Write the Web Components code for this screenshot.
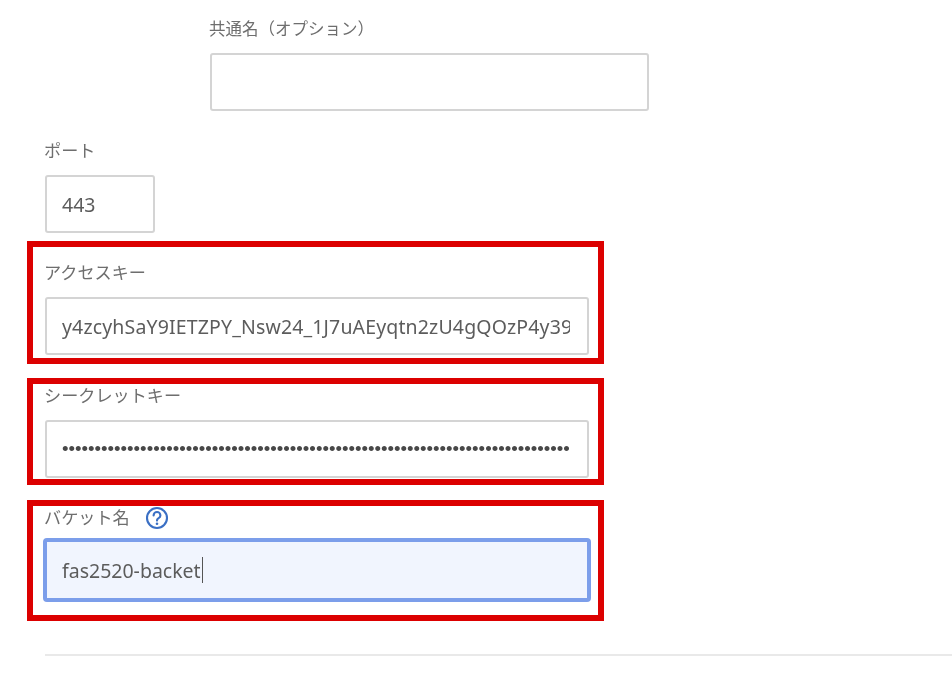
<!DOCTYPE html>
<html lang="ja">
<head>
<meta charset="utf-8">
<title>バケット設定</title>
<style>
html,body{margin:0;padding:0;background:#fff}
body{font-family:"Noto Sans","Noto Sans CJK JP",sans-serif;color:#5f5f5f;overflow:hidden;height:679px}
</style>
</head>
<body>
<x-form-page>
  <x-field label="共通名（オプション）" style="margin-left:210px;width:439px;--label-size:16.5px"></x-field>
  <x-field style="margin:28px 0 0 45px;width:110px" label="ポート" value="443"></x-field>
  <x-highlight style="margin-top:8px;--pt:14px;--pb:3px">
    <x-field label="アクセスキー" value="y4zcyhSaY9IETZPY_Nsw24_1J7uAEyqtn2zU4gQOzP4y39" style="--track:.15px"></x-field>
  </x-highlight>
  <x-highlight style="margin-top:14px;--pt:0px;--pb:1px">
    <x-field label="シークレットキー" secret></x-field>
  </x-highlight>
  <x-highlight style="margin-top:15px;--pt:0px;--pb:13px">
    <x-field label="バケット名" value="fas2520-backet" focused help style="--gap:8px"></x-field>
  </x-highlight>
  <x-rule></x-rule>
</x-form-page>
<script>
customElements.define('x-form-page', class extends HTMLElement {
  constructor(){
    super();
    this.attachShadow({mode:'open'}).innerHTML = `<style>
      :host{display:flex;flex-direction:column;align-items:flex-start;padding-top:17px;width:952px;box-sizing:border-box;filter:blur(.3px)}
    </style><slot></slot>`;
  }
});
customElements.define('x-highlight', class extends HTMLElement {
  constructor(){
    super();
    this.attachShadow({mode:'open'}).innerHTML = `<style>
      :host{display:block;box-sizing:border-box;width:577px;margin-left:27px;border:6px solid #dc0000;
        padding:var(--pt,0) 9px var(--pb,0) 12px}
    </style><slot></slot>`;
  }
});
customElements.define('x-help-icon', class extends HTMLElement {
  constructor(){
    super();
    this.attachShadow({mode:'open'}).innerHTML = `<style>
      :host{display:inline-flex;width:24px;height:24px}
      svg{display:block;width:100%;height:100%}
    </style><svg viewBox="0 0 24 24" fill="none" stroke="#3a6fc4" aria-hidden="true">
      <circle cx="12" cy="12" r="10" stroke-width="2.1"/>
      <path d="M8.6 9.4a3.4 3.4 0 0 1 6.8 0c0 1.9-1.5 2.5-2.5 3.3-.7.5-.9 1-.9 1.9" stroke-width="2.1" stroke-linecap="round"/>
      <circle cx="12" cy="17.7" r="1.3" fill="#3a6fc4" stroke="none"/>
    </svg>`;
  }
});
customElements.define('x-field', class extends HTMLElement {
  connectedCallback(){
    if(this.shadowRoot) return;
    const label = this.getAttribute('label')||'';
    let value = this.getAttribute('value')||'';
    const secret = this.hasAttribute('secret');
    if(secret) value = '•'.repeat(78);
    const focused = this.hasAttribute('focused');
    const root = this.attachShadow({mode:'open'});
    root.innerHTML = `<style>
      :host{display:block}
      .label{display:flex;align-items:center;height:24px;margin:0 0 var(--gap,12px) -1px;font-size:var(--label-size,17.15px);line-height:24px;color:#6e6e6e;gap:15px}
      .box{box-sizing:border-box;height:58px;border:2px solid #d4d4d4;border-radius:3px;background:#fff;
        display:flex;align-items:center;padding:0 17px 0 15px;font-size:19.5px;color:#5c5c5c;overflow:hidden}
      .box.focused{height:64px;margin:0 -2px;border:4px solid #7c9eea;border-radius:4px;background:#f1f5fe;padding-left:15px}
      .value{white-space:nowrap;overflow:hidden;flex:0 1 auto;letter-spacing:var(--track,0)}
      .caret{flex:none;width:1px;height:26px;background:#555;margin-left:1px}
      .secret{font-size:18.6px;font-family:"Liberation Sans",sans-serif;color:#484848}
    </style>
    <div class="label"><span></span></div>
    <div class="box"><span class="value"></span></div>`;
    root.querySelector('.label span').textContent = label;
    const v = root.querySelector('.value');
    v.textContent = value;
    if(secret) v.classList.add('secret');
    if(this.hasAttribute('help')) root.querySelector('.label').appendChild(document.createElement('x-help-icon'));
    const box = root.querySelector('.box');
    if(focused){
      box.classList.add('focused');
      const c = document.createElement('span'); c.className='caret'; box.appendChild(c);
    }
  }
});
customElements.define('x-rule', class extends HTMLElement {
  constructor(){
    super();
    this.attachShadow({mode:'open'}).innerHTML = `<style>
      :host{display:block;align-self:stretch;height:2px;margin:33px 0 0 45px;background:#e9e9e9}
    </style>`;
  }
});
</script>
</body>
</html>
